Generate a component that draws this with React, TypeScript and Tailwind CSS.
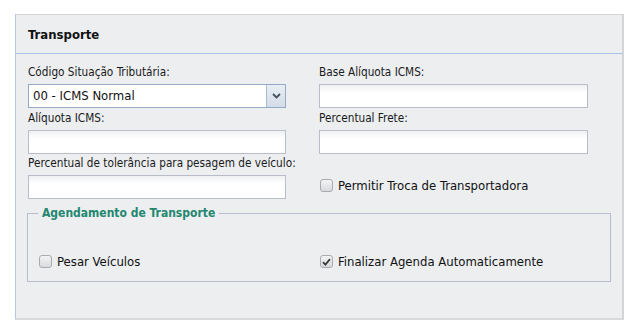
import React from "react";

const font = "font-['DejaVu_Sans_Condensed','DejaVu_Sans',sans-serif]";

function TextInput({ w }: { w: string }) {
    return (
        <div className={`${w} h-[24px] border border-[#b9bdc9] bg-gradient-to-b from-[#eef0f2] via-white via-[35%] to-white`} />
    );
}

function Check({ checked = false, label }: { checked?: boolean; label: string }) {
    return (
        <div className="flex items-center">
            <span className="w-[13px] h-[13px] rounded-[3px] border border-[#a9abb0] bg-gradient-to-b from-[#f4f4f4] to-[#d9dadd] flex items-center justify-center">
                {checked && (
                    <svg width="9" height="8" viewBox="0 0 9 8">
                        <path d="M1 4.2 L3.4 6.6 L8 1.2" fill="none" stroke="#3c3c3c" strokeWidth="1.8" />
                    </svg>
                )}
            </span>
            <span className="ml-[5px] text-[13px] text-[#111]">{label}</span>
        </div>
    );
}

export default function App() {
    return (
        <div className={`w-[638px] h-[336px] bg-white pt-[14px] pl-[15px] ${font}`}>
            <div className="w-[609px] h-[306px] bg-[#eceef0] border-t border-t-[#d2d4d6] border-l border-l-[#b3c6e2] border-r-2 border-r-[#d4d5d7] border-b-2 border-b-[#d8d9db] flex flex-col">
                {/* header */}
                <div className="h-[39px] border-b border-[#a7c1e6] flex items-center pl-[12px] pt-[1px]">
                    <span className="text-[13px] font-bold text-[#111]">Transporte</span>
                </div>

                <div className="pl-[12px] pt-[11px] text-[11.7px] text-[#1a1a1a]">
                    <div className="grid grid-cols-[291px_1fr]">
                        <div>
                            <div className="leading-[15px]">Código Situação Tributária:</div>
                            <div className="mt-[4px] w-[258px] h-[24px] border border-[#93a9c6] bg-white flex">
                                <div className="flex-1 flex items-center pl-[4px] text-[13px] text-[#111]">00 - ICMS Normal</div>
                                <div className="w-[19px] border-l border-[#a9bbd0] bg-gradient-to-b from-[#e8eef4] to-[#d3dde8] flex items-center justify-center">
                                    <svg width="9" height="6" viewBox="0 0 9 6">
                                        <path d="M1 1 L4.5 4.5 L8 1" fill="none" stroke="#44525f" strokeWidth="1.8" />
                                    </svg>
                                </div>
                            </div>
                            <div className="mt-[3px] leading-[15px]">Alíquota ICMS:</div>
                            <div className="mt-[4px]"><TextInput w="w-[258px]" /></div>
                            <div className="mt-[2px] leading-[15px]">Percentual de tolerância para pesagem de veículo:</div>
                            <div className="mt-[4px]"><TextInput w="w-[258px]" /></div>
                        </div>
                        <div>
                            <div className="leading-[15px]">Base Alíquota ICMS:</div>
                            <div className="mt-[4px]"><TextInput w="w-[269px]" /></div>
                            <div className="mt-[3px] leading-[15px]">Percentual Frete:</div>
                            <div className="mt-[4px]"><TextInput w="w-[269px]" /></div>
                            <div className="mt-[22px] ml-[1px]">
                                <Check label="Permitir Troca de Transportadora" />
                            </div>
                        </div>
                    </div>

                    <fieldset className="mt-[5px] -ml-[1px] w-[584px] h-[78px] border border-[#b7bccf] px-[11px] pt-[30px]">
                        <legend className="ml-[-1px] px-[4px] text-[12px] font-bold text-[#23876f]">Agendamento de Transporte</legend>
                        <div className="grid grid-cols-[281px_1fr]">
                            <Check label="Pesar Veículos" />
                            <Check checked label="Finalizar Agenda Automaticamente" />
                        </div>
                    </fieldset>
                </div>
            </div>
        </div>
    );
}
